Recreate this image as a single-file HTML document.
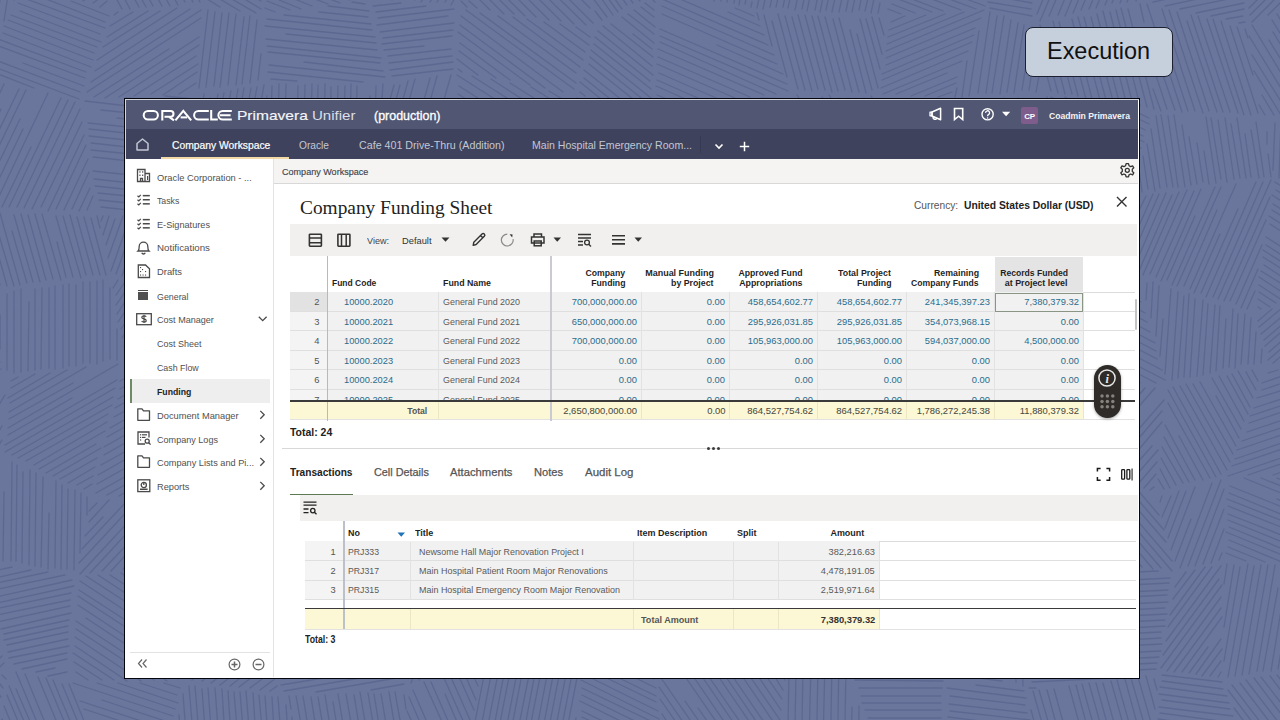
<!DOCTYPE html>
<html><head><meta charset="utf-8">
<style>
*{margin:0;padding:0;box-sizing:border-box}
html,body{width:1280px;height:720px;overflow:hidden}
body{background:#6a769c;font-family:"Liberation Sans",sans-serif;position:relative}
.a{position:absolute;white-space:nowrap}
svg{position:absolute;overflow:visible}
</style></head><body>
<svg style="left:0;top:0" width="1280" height="720"><path d="M16 -10L14 0M9 -11L4 21M2 -12L-8 47M-9 16L-18 68M-11 -14L-25 70M-24 23L-32 72M-24 -15L-39 74M-30 -16L-46 76M-37 -17L-53 79M-43 -17L-60 78M-52 -6L-67 80M-57 -17L-73 81M-64 -17L-81 84M-70 -19L-88 83M-77 -19L-92 71M-84 -20L-89 9M1 369L-9 373M0 362L-21 371M-2 355L-37 370M-11 352L-50 369M-7 342L-62 366M-9 335L-76 364M-12 329L-91 363M-11 321L-103 360M-42 327L-117 359M-18 309L-117 352M-20 302L-118 344M-19 295L-120 338M-34 294L-118 330M-77 304L-119 322M-64 291L-119 314M-83 292L-120 308M-92 288L-118 299M-107 287L-119 292M2 440L-9 458M2 426L-19 463M-9 433L-29 465M5 395L-41 471M-9 404L-54 478M-1 378L-64 482M-10 379L-75 487M-17 375L-85 489M-24 375L-97 496M-33 375L-100 487M-38 372L-102 479M-48 374L-103 467M-54 371L-105 456M-63 372L-106 443M-84 393L-108 432M-78 370L-109 422M-85 369L-112 414M-92 366L-112 401M-100 367L-115 391M-107 364L-116 380M-116 364L-118 368M-16 464L-4 468M-25 468L-5 474M-33 472L-9 479M-44 476L-8 487M-44 483L-11 493M-61 485L-14 499M-71 488L-13 505M-78 493L-17 511M-61 505L-18 517M-96 501L-20 523M-100 506L-21 529M-102 512L-22 535M-92 522L-24 542M-103 526L-26 548M-107 531L-27 555M-109 538L-38 559M-110 544L-61 559M-113 551L-83 559M-113 557L-104 559M4 663L-6 672M2 656L-18 674M-1 648L-35 680M-2 641L-49 685M-3 634L-61 688M-5 628L-74 692M-9 623L-87 696M-30 632L-88 687M-14 609L-90 681M-14 599L-92 672M-52 626L-94 666M-20 588L-93 657M-22 582L-95 650M-51 600L-98 643M-35 575L-98 634M-30 562L-99 627M-38 561L-102 621M-48 562L-103 613M-58 562L-106 606M-67 562L-108 600M-85 570L-109 592M-87 563L-109 584M-94 561L-112 578M-105 562L-114 570M2 675L6 679M-4 679L3 688M-10 682L1 697M-20 679L-1 704M-27 682L-2 715M-24 696L-4 722M-37 691L-5 733M-47 689L-7 741M-54 690L-9 749M-62 692L-11 759M-68 693L-12 768M-76 696L-20 770M-82 698L-29 769M-87 704L-39 767M-86 716L-49 766M-88 725L-58 766M-88 736L-67 763M-89 745L-76 763M107 1L100 7M107 -7L93 3M106 -15L83 1M105 -24L72 -1M104 -33L63 -4M101 -38L54 -5M100 -47L44 -8M99 -56L36 -11M99 -64L27 -13M96 -71L24 -21M80 -68L23 -29M72 -72L25 -39M92 -95L26 -49M91 -103L26 -57M83 -106L28 -68M74 -110L29 -78M62 -111L27 -86M55 -115L28 -96M44 -115L28 -104M35 -118L31 -115M71 1L109 16M23 -10L105 22M21 -3L105 28M18 3L100 34M20 11L101 42M11 15L97 47M8 20L94 53M4 26L93 60M3 33L91 67M-2 39L86 72M-4 45L85 78M23 63L84 86M-10 58L80 92M-11 65L79 99M-15 69L34 88M93 196L87 210M90 188L79 211M89 172L72 209M88 159L64 210M86 145L56 209M84 135L48 211M82 122L41 207M80 109L32 209M75 102L24 208M68 100L17 207M61 98L9 207M31 147L2 207M48 93L-7 209M23 129L-11 200M20 119L-11 183M26 90L-12 169M19 89L-13 155M1 109L-15 143M4 84L-15 124M-1 81L-17 113M-10 82L-17 98M-16 79L-18 84M97 216L100 228M91 218L106 275M84 217L100 275M77 217L93 275M70 215L86 275M63 216L81 278M56 216L73 277M57 242L66 277M42 214L61 280M35 214L53 279M28 215L46 280M21 214L40 282M14 215L33 282M12 231L27 283M-0 213L20 285M-7 215L14 286M-11 221L7 286M-13 239L0 285M-14 260L-5 289M-16 281L-14 288M117 329L117 360M110 288L110 359M103 280L103 361M97 281L97 364M90 282L90 363M83 282L83 363M76 285L76 366M69 284L69 366M63 285L63 368M55 286L55 369M49 288L49 368M42 288L41 369M35 289L35 370M29 302L28 371M21 289L21 372M14 291L14 373M7 294L7 370M0 315L0 349M-7 295L-7 327M-13 297L-13 307M92 484L84 489M93 476L77 485M95 467L68 483M97 458L60 479M101 448L53 476M96 444L46 473M105 431L39 469M107 422L34 465M108 414L26 461M112 405L18 458M113 397L12 455M115 388L5 452M117 380L5 445M72 398L8 435M118 364L8 428M73 383L9 419M86 367L9 412M67 370L10 403M50 373L8 398M35 374L11 388M18 377L11 381M87 497L87 515M81 493L80 553M75 490L74 570M68 489L67 569M62 485L61 569M56 481L55 568M49 513L48 569M43 477L41 567M36 473L35 566M30 470L29 565M23 472L22 563M17 465L16 561M12 462L11 561M4 492L3 561M-2 502L-2 561M-8 499L-9 560M-14 520L-15 557M-22 548L-22 558M67 672L48 676M55 668L36 672M67 659L22 669M67 653L14 664M69 646L9 658M68 639L8 652M68 632L7 645M68 626L4 640M69 620L4 634M71 613L1 629M70 606L-3 622M70 600L-3 615M71 593L-5 609M74 586L-7 604M72 580L-8 598M65 575L-11 591M48 572L-12 585M31 570L-14 580M12 567L-16 573M-4 564L-20 567M69 684L104 770M62 684L97 768M53 680L91 771M46 678L85 771M38 677L76 768M51 721L72 770M25 674L64 769M16 672L57 770M16 689L51 770M9 686L44 768M7 695L38 769M4 706L31 771M2 719L24 770M-0 727L18 770M-2 738L12 771M-4 749L6 771M-7 758L-2 768M207 -105L210 -98M199 -105L210 -84M191 -105L209 -72M193 -85L207 -60M174 -105L206 -46M166 -105L205 -34M158 -103L204 -19M149 -106L202 -8M140 -106L200 2M133 -106L193 2M126 -105L185 2M117 -106L178 5M127 -72L170 6M100 -105L162 6M96 -97L153 6M99 -79L146 7M103 -57L139 7M107 -34L130 9M110 -13L122 9M196 83L179 94M197 72L163 95M198 64L151 94M196 56L134 96M199 45L119 97M199 37L105 98M169 49L94 97M201 18L87 92M201 10L91 82M190 9L95 71M177 8L97 60M160 11L103 47M148 11L107 37M133 12L110 26M118 12L114 15M165 96L193 99M126 98L196 106M85 101L197 114M101 110L198 120M117 118L198 127M88 123L198 134M89 129L199 141M89 136L201 148M91 143L201 155M91 150L200 161M93 157L203 169M142 169L205 176M93 171L205 183M94 179L206 191M95 186L207 198M98 193L206 204M99 200L207 211M101 207L192 217M209 225L186 293M205 219L180 291M198 222L174 290M190 221L166 289M184 218L160 288M177 221L155 284M170 219L147 283M164 219L142 281M152 231L135 279M150 219L129 277M142 218L122 276M136 218L116 274M130 217L111 271M123 216L108 258M115 219L106 245M109 216L103 235M103 216L101 221M172 372L161 388M176 356L156 385M179 339L152 379M184 322L147 375M187 307L142 374M185 299L137 369M179 299L133 365M152 327L128 362M166 294L126 354M160 293L124 346M154 290L122 338M149 289L121 329M142 287L118 322M135 287L117 314M130 285L116 305M125 282L116 295M118 280L113 288M196 502L189 506M192 496L179 504M191 489L166 503M189 482L155 501M187 474L142 499M185 467L130 499M165 470L119 496M169 460L107 495M180 446L96 493M175 440L97 484M149 446L98 475M173 425L101 465M171 417L104 455M169 410L104 447M160 407L107 437M156 402L110 428M159 392L114 417M152 387L115 408M147 382L118 399M141 378L120 389M135 373L120 381M207 553L197 562M201 548L186 564M194 546L176 565M202 526L165 566M199 520L155 567M197 510L144 567M188 510L134 568M179 509L123 569M171 506L111 571M164 505L102 571M153 505L90 573M145 504L80 574M134 504L79 563M126 502L82 549M103 517L85 536M109 500L89 522M97 503L89 511M200 566L207 571M191 568L204 577M178 568L203 585M168 570L203 592M157 571L199 598M166 586L198 606M133 573L197 615M121 573L195 622M110 575L193 629M98 575L192 637M86 576L192 645M80 581L187 651M79 590L187 660M78 596L185 666M78 605L184 675M86 618L178 679M76 621L167 681M76 629L154 680M75 637L141 681M75 646L127 681M73 653L114 680M74 662L102 680M76 672L88 680M164 683L180 688M140 683L177 695M118 683L178 703M97 683L175 709M73 683L173 716M102 700L171 723M80 701L169 730M84 709L169 737M120 729L168 745M93 727L166 751M96 736L162 758M112 749L159 764M105 754L144 766M108 762L128 768M256 -114L267 -108M249 -112L265 -103M240 -110L264 -96M231 -108L264 -89M221 -106L264 -80M217 -101L263 -74M215 -94L263 -66M215 -87L264 -58M213 -81L263 -51M213 -72L263 -43M235 -53L263 -36M212 -58L262 -29M210 -52L262 -22M211 -43L260 -15M210 -36L262 -5M211 -29L261 1M210 -22L261 9M211 -13L256 13M208 -8L240 11M207 -1L220 7M261 54L258 80M257 20L250 83M250 16L242 84M244 17L236 85M236 14L228 85M229 13L220 87M222 13L214 86M215 12L206 87M208 10L199 88M278 184L273 210M275 166L267 212M273 144L261 212M270 122L254 212M267 96L247 213M264 85L241 214M257 87L234 214M251 88L228 215M244 88L222 213M238 89L216 214M231 91L211 205M224 93L208 183M218 94L206 160M210 98L203 139M204 94L201 115M277 686L270 691M276 678L260 690M277 668L250 688M276 659L239 687M275 651L230 686M276 642L220 685M253 651L211 683M275 626L202 681M273 617L192 680M274 609L191 673M274 600L191 664M273 593L195 653M273 583L195 642M272 576L199 632M265 573L200 622M236 585L204 610M244 570L205 599M235 569L208 590M225 567L210 579M306 738L307 745M299 728L301 748M292 717L294 748M286 705L289 748M278 697L282 750M272 697L275 749M265 696L269 751M259 695L264 752M253 693L257 753M246 691L251 753M240 692L245 754M234 692L239 752M228 691L232 754M222 689L226 756M215 688L220 755M208 688L213 756M202 689L207 757M195 686L201 760M189 686L195 759M183 694L188 759M179 715L182 761M173 735L175 761M168 755L169 761M339 -113L362 -104M320 -113L362 -97M330 -103L363 -90M277 -117L364 -83M272 -111L363 -76M271 -106L362 -70M296 -88L365 -62M271 -92L364 -56M271 -85L365 -48M269 -79L365 -41M270 -72L365 -35M269 -65L364 -28M269 -58L364 -22M267 -52L365 -14M270 -45L367 -8M270 -38L364 -2M268 -32L350 0M269 -25L340 3M266 -20L328 4M267 -12L312 6M279 -0L301 9M267 1L290 10M265 8L275 12M352 2L365 4M328 6L369 11M319 12L368 17M284 15L371 24M267 19L372 30M265 26L375 37M286 34L376 43M266 39L377 50M267 46L381 58M268 52L380 63M304 62L383 71M269 65L385 77M268 72L363 82M271 79L297 81M383 84L382 99M376 86L375 121M370 96L368 144M363 107L362 163M357 86L355 183M351 84L349 186M345 86L342 188M338 86L335 191M331 87L329 194M325 84L323 195M318 85L316 199M312 84L309 199M305 85L302 203M298 86L295 205M291 129L289 207M286 84L283 208M279 84L277 165M272 86L271 116M404 684L371 690M402 677L316 692M401 671L284 691M402 665L281 685M402 659L283 679M396 653L282 673M400 646L282 667M400 641L281 661M399 634L280 655M398 628L282 648M397 623L280 643M398 616L282 636M395 610L281 630M396 604L282 623M396 597L281 616M396 591L279 611M393 585L279 605M393 580L281 599M392 573L281 592M392 567L279 587M391 561L279 580M391 555L280 574M404 695L406 709M395 692L406 754M389 692L404 782M381 694L395 777M374 694L387 774M368 693L381 771M360 692L373 769M354 695L366 767M346 694L358 763M338 694L349 760M333 702L342 757M325 695L334 751M318 697L327 750M311 697L319 747M303 696L310 739M296 696L301 724M289 696L291 709M458 -8L451 5M461 -24L445 2M458 -32L437 2M465 -55L430 2M468 -73L421 2M470 -87L415 -0M470 -99L408 -1M461 -99L400 -2M454 -100L392 -0M428 -71L385 -2M440 -103L377 -2M433 -102L372 -5M425 -103L369 -13M412 -95L370 -27M411 -105L369 -38M403 -104L368 -48M396 -106L368 -62M388 -106L368 -73M381 -107L367 -85M372 -104L367 -97M453 69L392 76M453 62L390 70M452 56L389 63M451 49L388 56M424 46L384 50M452 36L382 44M453 30L383 38M454 23L380 32M448 16L377 25M454 9L378 18M426 6L376 12M401 3L373 6M461 161L459 169M460 140L451 172M457 126L444 172M456 104L437 173M449 104L430 173M451 75L423 174M431 122L416 176M437 76L409 178M430 78L403 177M408 129L394 180M415 79L387 181M408 81L381 180M400 85L373 183M394 85L367 184M376 122L360 183M478 644L474 656M473 638L465 659M469 630L456 662M465 622L447 668M460 615L439 670M457 606L429 677M451 600L419 680M445 596L411 683M439 592L408 672M435 588L406 659M429 581L405 641M423 577L403 629M418 572L402 615M411 570L400 598M406 565L398 583M402 558L397 570M480 657L483 664M474 660L480 674M468 664L478 686M462 668L476 700M456 670L474 710M449 673L471 722M444 678L469 734M445 694L467 745M431 682L464 757M424 682L459 759M434 721L451 761M413 690L446 766M409 697L439 766M407 711L434 771M408 728L427 772M407 743L422 776M408 761L415 777M558 -112L571 -100M547 -112L573 -86M542 -108L574 -77M530 -110L577 -63M522 -108L579 -52M513 -106L583 -37M505 -104L583 -27M495 -104L585 -15M487 -102L587 -3M479 -101L590 8M474 -95L593 23M529 -31L586 25M472 -77L574 24M470 -69L561 21M469 -60L549 20M468 -51L536 17M468 -40L525 16M465 -34L514 14M464 -26L504 14M463 -17L490 10M469 1L477 8M461 1L467 7M576 27L590 37M560 24L589 45M544 22L585 52M527 19L583 60M513 17L580 67M498 16L576 73M480 13L576 83M466 10L574 89M461 16L563 92M460 25L545 88M458 32L530 85M460 43L510 80M459 51L496 78M457 59L478 75M458 69L462 72M549 91L569 103M531 87L568 110M510 83L564 117M491 79L561 124M472 76L561 132M457 75L556 138M459 86L555 147M458 94L552 154M461 103L551 161M484 128L547 168M467 126L535 169M461 130L522 169M486 155L510 170M463 149L495 170M464 158L483 170M467 168L472 171M577 771L574 791M577 741L568 788M576 718L563 787M578 673L556 785M577 648L551 783M571 649L545 783M564 650L539 779M558 649L534 777M552 649L528 775M545 652L521 773M539 652L516 774M534 650L510 770M526 653L504 768M521 652L499 766M513 657L492 763M508 653L487 764M502 653L481 761M495 654L475 759M488 655L468 758M682 -86L688 -78M674 -87L685 -72M666 -87L682 -65M653 -94L679 -59M646 -94L676 -53M636 -98L673 -47M626 -101L670 -39M619 -101L668 -34M632 -73L663 -30M598 -108L661 -22M590 -110L658 -16M579 -114L654 -10M571 -114L650 -6M572 -102L644 -3M575 -89L640 1M578 -73L633 3M580 -60L627 5M584 -44L622 9M586 -32L618 12M589 -19L613 15M592 -3L607 17M595 11L602 20M652 -1L655 2M645 3L654 10M641 7L654 17M634 10L655 27M628 14L654 34M622 17L654 43M633 34L652 49M611 24L653 57M603 26L652 66M598 31L653 75M595 37L650 81M594 44L651 89M591 50L651 98M590 57L650 105M589 64L643 107M584 70L627 104M584 78L614 102M580 82L601 99M580 92L585 96M635 108L649 113M577 98L653 120M573 103L652 127M572 108L654 132M572 114L656 139M571 121L658 147M568 126L659 153M566 131L662 160M565 138L663 167M565 144L663 173M569 152L665 180M561 155L665 186M558 161L668 194M555 166L668 200M645 199L670 206M601 653L654 679M583 652L656 688M582 660L656 696M582 666L656 702M581 673L658 711M581 680L659 719M582 688L661 726M582 695L661 734M580 701L659 740M582 711L652 745M582 717L647 748M607 737L640 753M583 732L632 756M579 737L627 760M580 745L622 765M582 754L614 769M580 760L608 774M582 769L600 777M580 774L596 781M582 782L588 785M752 2L751 7M750 -19L745 4M747 -40L739 5M745 -57L734 3M743 -79L727 2M741 -102L721 1M734 -103L714 1M721 -62L710 -2M721 -94L703 -3M711 -81L696 -5M707 -88L691 -4M696 -65L685 -6M693 -83L678 -8M682 -58L673 -10M671 -35L667 -10M735 8L754 16M728 12L760 26M673 -4L764 35M662 -1L768 45M662 6L774 55M662 14L777 64M717 45L783 74M660 29L787 84M660 36L788 91M660 42L776 94M658 49L764 95M658 57L750 97M657 64L735 98M659 73L723 101M657 80L709 103M656 86L699 105M657 95L682 105M658 102L670 107M761 98L791 99M719 103L793 106M685 110L790 113M658 115L792 119M660 122L791 126M714 131L790 134M660 136L790 140M662 142L790 146M666 150L790 154M666 156L790 160M667 164L792 167M669 169L789 173M671 177L790 180M670 184L792 187M674 190L791 194M673 197L790 200M677 204L791 207M721 213L790 215M780 672L785 680M775 677L783 690M764 673L782 699M756 673L781 710M751 678L780 720M740 673L781 733M731 674L779 744M724 674L777 752M716 673L777 762M707 674L776 774M701 675L774 782M693 676L762 777M684 675L753 775M698 708L739 767M685 701L729 765M659 675L717 759M659 687L705 754M660 699L696 751M662 714L683 746M664 728L674 742M880 3L878 13M875 -6L871 13M871 -14L865 11M866 -26L859 10M862 -35L852 12M857 -45L846 11M853 -54L839 12M848 -63L832 12M844 -73L826 10M840 -84L820 12M834 -83L815 10M827 -85L807 11M822 -86L802 9M816 -90L795 10M809 -89L788 8M803 -92L783 7M798 -94L776 7M791 -93L770 7M775 -48L763 9M779 -97L757 8M770 -81L753 -4M766 -100L751 -28M761 -103L749 -45M755 -103L747 -66M748 -103L745 -85M879 18L884 35M872 17L882 54M866 19L880 69M860 19L878 88M857 34L872 90M850 30L866 93M839 18L859 92M833 19L852 92M825 17L845 90M818 16L838 91M812 16L832 92M805 15L825 90M798 15L818 89M792 17L812 91M785 16L805 90M778 14L798 89M772 21L787 77M764 15L772 46M757 13L759 20M871 96L874 101M864 98L872 110M859 104L869 118M848 98L866 125M839 98L865 136M829 95L861 143M822 97L859 153M822 108L857 161M809 101L854 168M797 95L851 176M797 108L849 187M797 119L846 194M795 128L844 202M796 144L839 208M796 155L832 209M795 167L823 210M796 179L818 212M796 191L811 214M794 201L803 214M880 764L879 781M872 745L872 782M867 728L865 783M859 706L858 781M852 707L850 783M846 665L844 783M839 655L837 783M832 659L830 782M825 662L822 784M818 662L816 781M811 665L808 781M803 668L801 782M796 671L794 784M789 672L787 782M781 749L780 781M926 -77L940 -72M904 -79L944 -64M877 -82L948 -55M853 -85L953 -47M846 -80L959 -38M870 -65L962 -30M855 -63L971 -20M875 -49L974 -12M861 -47L979 -3M865 -39L985 6M904 -18L976 9M873 -23L961 10M907 -3L943 11M880 -8L932 12M892 4L915 13M888 9L901 14M952 92L938 97M956 83L925 96M957 77L911 96M947 73L896 94M962 61L883 94M968 51L881 88M972 42L882 80M974 35L882 74M975 28L886 65M981 18L886 58M984 10L886 51M964 12L887 44M945 14L888 37M926 15L889 30M905 16L891 22M941 147L932 164M947 120L923 168M948 101L911 175M940 101L900 180M932 102L891 184M924 100L879 190M916 100L869 194M909 99L858 200M901 99L848 204M892 99L857 169M884 100L868 133M850 659L925 659M882 667L941 667M854 674L942 674M855 680L943 681M859 688L942 688M861 696L941 696M862 703L941 703M865 710L941 710M868 718L941 718M870 725L941 725M873 732L941 732M893 740L943 740M879 747L940 747M881 755L943 755M896 761L942 761M887 769L942 769M888 777L925 777M1035 -98L1040 -97M1019 -94L1039 -90M1000 -90L1037 -84M983 -86L1037 -77M967 -82L1039 -69M950 -79L1035 -64M944 -73L1036 -56M950 -66L1036 -51M955 -58L1035 -44M959 -50L1037 -37M962 -43L1033 -31M966 -36L1034 -24M968 -28L1035 -16M974 -21L1035 -11M977 -13L1034 -3M982 -6L1032 3M988 2L1031 9M990 8L1032 16M1039 76L1036 92M1037 39L1029 90M1032 27L1022 90M1024 25L1014 93M1018 23L1007 92M1011 20L1000 94M1004 16L992 93M997 16L986 93M990 12L978 93M979 31L969 96M967 61L962 97M957 88L955 97M1058 196L1056 210M1054 162L1050 206M1050 127L1042 205M1047 97L1036 201M1039 99L1029 199M1029 130L1022 196M1025 100L1015 192M1018 98L1009 190M1010 100L1002 186M1004 98L995 183M993 133L988 180M990 100L982 178M983 100L975 176M975 102L968 174M969 101L962 171M961 103L955 167M955 100L949 165M944 140L942 162M1046 561L1047 585M1040 560L1041 612M1033 563L1035 645M1027 562L1029 675M1020 562L1023 686M1013 561L1016 682M1007 561L1009 678M1000 562L1002 676M993 562L995 674M986 563L988 672M981 562L983 671M974 576L976 666M967 597L969 666M962 616L963 663M955 636L955 659M950 668L974 671M947 674L1002 681M976 685L1024 691M947 688L1026 698M950 696L1025 705M949 704L1027 713M950 711L1030 720M948 717L1029 727M986 728L1030 734M948 731L1032 741M947 738L1033 748M948 746L1033 756M948 753L1032 763M977 764L1012 768M947 767L972 770M1149 -32L1136 1M1162 -81L1127 2M1158 -89L1120 3M1152 -91L1112 3M1128 -50L1105 5M1118 -44L1096 8M1131 -91L1089 9M1104 -45L1081 10M1117 -92L1073 13M1110 -93L1065 16M1103 -92L1058 15M1079 -54L1049 16M1089 -94L1040 21M1082 -95L1037 14M1073 -88L1037 -3M1054 -64L1038 -26M1061 -96L1039 -44M1048 -82L1041 -66M1047 -96L1043 -84M1140 4L1144 22M1141 31L1149 62M1128 9L1154 109M1121 8L1147 107M1116 10L1140 106M1110 12L1133 105M1103 11L1127 106M1097 14L1119 102M1091 17L1113 101M1084 17L1106 100M1078 17L1100 100M1072 19L1092 99M1073 50L1086 99M1059 22L1078 96M1053 21L1072 94M1055 55L1065 94M1040 25L1058 93M1040 49L1051 91M1130 109L1149 118M1110 105L1149 124M1088 102L1145 130M1065 97L1143 136M1051 97L1144 142M1057 107L1141 148M1051 111L1140 154M1053 119L1138 161M1055 126L1136 166M1056 133L1135 172M1054 139L1132 177M1056 147L1130 184M1058 155L1128 190M1059 162L1125 194M1058 168L1118 197M1060 176L1108 199M1059 182L1100 202M1059 189L1090 204M1061 196L1083 207M1062 204L1074 210M1124 200L1128 202M1117 204L1129 210M1107 206L1129 218M1097 207L1131 226M1090 210L1131 233M1082 213L1132 241M1072 215L1132 249M1062 217L1134 258M1063 224L1134 264M1062 232L1136 273M1061 237L1131 276M1060 245L1122 280M1059 251L1113 282M1059 258L1106 285M1066 269L1100 289M1058 273L1092 292M1057 279L1084 294M1058 288L1077 298M1062 297L1071 302M1058 301L1063 304M1131 282L1138 285M1124 285L1139 293M1125 293L1141 302M1105 292L1145 313M1099 297L1147 322M1088 299L1150 332M1078 302L1155 343M1070 306L1156 351M1063 310L1157 359M1054 314L1162 370M1055 323L1165 380M1056 331L1156 383M1056 339L1140 383M1058 348L1127 384M1066 360L1109 383M1059 365L1095 384M1064 375L1081 385M1061 382L1066 384M1154 487L1150 490M1156 474L1144 488M1157 462L1138 484M1158 450L1132 480M1152 446L1124 478M1162 422L1118 474M1162 411L1110 472M1164 400L1105 468M1136 420L1097 466M1155 388L1089 463M1145 388L1083 460M1137 387L1077 457M1127 386L1068 454M1090 418L1062 452M1108 388L1059 444M1096 389L1060 431M1089 387L1059 421M1079 388L1059 411M1068 389L1058 401M1136 488L1159 515M1122 481L1164 530M1109 476L1166 542M1093 469L1172 561M1080 463L1172 571M1067 458L1161 568M1060 459L1153 569M1060 471L1142 567M1058 478L1132 565M1079 513L1123 565M1058 500L1113 564M1057 509L1103 563M1056 519L1092 560M1056 528L1083 560M1057 539L1071 557M1055 547L1063 556M1036 688L1029 688M1112 678L1032 682M1156 669L1035 675M1157 663L1034 669M1159 657L1035 664M1161 651L1036 657M1162 644L1039 650M1161 638L1039 645M1161 632L1041 638M1165 626L1043 633M1165 620L1042 626M1167 614L1043 620M1165 608L1046 614M1168 602L1045 608M1167 595L1049 601M1168 590L1050 596M1169 583L1048 589M1170 578L1051 584M1158 571L1054 576M1120 567L1052 570M1092 563L1054 565M1154 679L1157 690M1146 676L1155 709M1138 677L1154 733M1131 678L1153 755M1125 679L1151 775M1117 680L1144 776M1111 681L1137 774M1103 683L1128 773M1096 683L1121 774M1089 683L1114 773M1082 684L1107 773M1076 685L1099 771M1069 686L1092 770M1071 722L1084 769M1054 689L1076 769M1047 690L1068 768M1039 690L1061 766M1033 691L1054 765M1031 710L1046 765M1245 22L1239 23M1243 16L1226 19M1244 9L1211 16M1244 3L1196 13M1243 -4L1180 9M1221 -6L1165 6M1244 -17L1153 2M1243 -23L1146 -3M1243 -29L1148 -10M1242 -36L1150 -18M1241 -42L1153 -24M1242 -48L1152 -30M1243 -56L1155 -38M1242 -62L1157 -44M1241 -69L1157 -52M1241 -74L1159 -58M1242 -81L1161 -64M1242 -87L1161 -71M1239 -93L1164 -78M1205 -93L1164 -85M1245 29L1248 38M1237 27L1253 75M1230 26L1258 113M1221 21L1251 115M1213 19L1244 115M1207 19L1238 113M1198 16L1230 112M1191 15L1223 112M1187 21L1217 112M1177 12L1209 111M1169 10L1203 113M1162 9L1195 111M1169 53L1188 111M1147 4L1182 112M1155 52L1175 110M1148 51L1167 109M1153 89L1161 111M1268 154L1271 177M1256 122L1264 177M1251 130L1259 178M1245 134L1251 177M1237 118L1246 178M1231 124L1240 178M1225 118L1234 179M1218 120L1227 182M1211 118L1221 179M1206 117L1216 183M1204 151L1209 184M1197 143L1203 182M1189 137L1197 184M1182 125L1191 185M1174 115L1185 187M1168 116L1178 187M1161 115L1173 187M1156 116L1167 187M1151 129L1160 188M1147 144L1155 191M1143 156L1148 189M1139 169L1142 192M1135 182L1136 190M1255 291L1247 309M1258 269L1241 308M1262 245L1236 304M1266 220L1230 301M1270 197L1224 301M1271 180L1218 299M1263 182L1213 297M1256 182L1206 297M1238 209L1201 293M1220 234L1194 293M1236 184L1190 289M1217 210L1184 286M1221 187L1177 286M1215 187L1172 285M1195 216L1167 280M1201 189L1161 281M1194 191L1156 277M1187 190L1150 274M1179 192L1143 275M1172 195L1139 271M1166 193L1138 258M1159 194L1136 247M1153 194L1135 235M1146 196L1134 221M1138 197L1132 210M1262 349L1261 363M1256 332L1254 364M1251 318L1248 364M1245 314L1241 364M1238 314L1235 368M1233 309L1229 367M1226 319L1223 368M1220 306L1216 371M1215 305L1210 373M1208 304L1203 375M1203 300L1197 376M1195 299L1190 377M1189 294L1184 377M1184 296L1178 378M1178 292L1172 380M1171 289L1165 374M1163 319L1160 356M1159 286L1156 336M1153 282L1151 318M1147 283L1146 300M1252 370L1258 381M1246 372L1256 390M1238 371L1253 398M1232 374L1250 407M1227 376L1248 414M1219 376L1244 421M1212 378L1241 429M1216 396L1239 438M1200 382L1236 446M1193 384L1233 454M1186 384L1230 462M1180 386L1227 470M1173 387L1221 474M1168 390L1216 477M1168 403L1210 478M1179 436L1203 480M1165 425L1195 480M1164 437L1189 482M1162 447L1183 483M1161 458L1176 485M1160 469L1170 488M1158 479L1164 489M1222 553L1219 560M1224 529L1211 563M1224 509L1203 564M1224 489L1195 566M1221 480L1188 566M1212 483L1180 568M1191 519L1175 561M1195 487L1171 550M1186 491L1168 538M1179 491L1165 528M1171 496L1162 517M1162 496L1160 502M1221 672L1218 677M1221 661L1210 676M1222 649L1202 676M1221 639L1196 674M1208 647L1189 673M1222 617L1182 672M1221 608L1174 672M1221 597L1167 671M1222 585L1161 668M1219 579L1163 655M1221 566L1166 641M1212 567L1168 627M1205 567L1170 615M1195 570L1173 599M1186 572L1175 587M1162 675L1222 682M1162 681L1223 689M1160 687L1227 696M1159 694L1229 703M1162 700L1230 709M1159 707L1233 716M1160 713L1235 723M1158 719L1239 730M1197 731L1240 737M1157 731L1242 743M1156 738L1247 751M1158 744L1249 756M1159 751L1250 763M1158 758L1254 771M1156 763L1257 777M1156 770L1258 784M1155 777L1238 788M1349 -22L1344 -18M1347 -29L1329 -11M1343 -33L1314 -5M1342 -42L1299 1M1338 -46L1284 8M1307 -24L1268 15M1333 -59L1252 22M1331 -65L1250 15M1327 -69L1249 8M1323 -74L1250 -2M1321 -81L1248 -9M1315 -83L1248 -16M1306 -83L1249 -26M1299 -84L1247 -33M1286 -81L1248 -43M1285 -87L1249 -52M1277 -88L1249 -60M1268 -87L1248 -67M1257 -84L1247 -74M1254 -89L1248 -84M1350 -16L1353 -11M1344 -12L1353 3M1338 -9L1355 20M1329 -8L1356 36M1324 -5L1358 51M1317 -2L1359 67M1311 2L1362 85M1318 28L1362 99M1298 7L1364 115M1291 10L1358 119M1284 11L1351 121M1277 14L1341 119M1272 20L1332 117M1273 32L1325 118M1269 40L1317 119M1252 25L1309 119M1249 36L1298 116M1252 55L1290 116M1254 71L1281 115M1262 95L1274 115M1259 105L1265 115M1356 126L1355 148M1349 127L1347 167M1342 124L1339 187M1336 125L1332 205M1329 124L1324 212M1322 124L1319 206M1313 156L1311 203M1309 123L1305 198M1301 124L1298 192M1295 121L1292 189M1288 122L1285 185M1281 121L1279 178M1275 123L1273 170M1267 132L1267 144M1275 182L1298 197M1276 190L1326 221M1272 195L1328 231M1273 204L1329 239M1272 210L1329 246M1269 216L1331 256M1270 224L1332 264M1295 247L1333 271M1266 237L1335 281M1266 245L1332 287M1263 250L1324 289M1263 257L1318 292M1264 265L1308 294M1261 271L1300 295M1259 277L1291 298M1259 285L1285 302M1259 292L1276 303M1258 299L1270 307M1258 307L1261 309M1364 388L1356 395M1362 382L1352 391M1357 377L1344 389M1357 371L1339 386M1348 370L1330 386M1356 355L1325 382M1344 357L1317 380M1351 344L1311 378M1349 338L1307 374M1348 331L1300 372M1347 324L1293 370M1344 318L1287 367M1343 311L1281 364M1342 304L1273 363M1338 300L1268 360M1336 294L1269 352M1327 293L1265 346M1316 296L1264 340M1303 299L1261 334M1287 304L1259 327M1272 309L1258 321M1323 473L1318 475M1330 463L1292 475M1336 454L1273 475M1343 443L1248 475M1349 435L1228 476M1356 424L1232 466M1361 416L1235 459M1367 406L1237 450M1340 408L1242 441M1351 397L1247 432M1339 393L1249 423M1329 390L1250 416M1321 386L1254 408M1290 388L1257 398M1297 378L1262 390M1288 374L1262 383M1278 370L1268 373M1309 477L1323 482M1294 478L1325 491M1277 478L1328 499M1261 478L1329 505M1244 478L1330 513M1277 499L1332 521M1230 486L1332 527M1229 493L1335 536M1227 499L1336 542M1228 506L1339 550M1228 514L1340 558M1228 520L1342 566M1229 527L1322 565M1226 532L1304 564M1229 540L1284 563M1228 547L1265 562M1226 553L1246 561M1342 570L1329 650M1329 606L1320 658M1329 571L1313 660M1322 569L1306 662M1316 569L1300 664M1309 569L1292 664M1301 569L1284 667M1295 569L1278 669M1288 568L1271 671M1278 588L1263 671M1275 565L1257 671M1268 565L1249 674M1261 565L1242 675M1254 566L1235 676M1248 564L1228 677M1240 567L1224 661M1234 565L1224 627M1227 564L1224 584M1322 668L1335 684M1313 666L1342 704M1307 670L1350 727M1298 669L1351 739M1290 671L1346 744M1284 674L1340 748M1277 675L1333 748M1270 676L1327 751M1261 677L1321 755M1254 678L1314 758M1246 680L1309 762M1240 683L1303 766M1232 685L1296 769M1228 690L1290 772M1234 708L1285 776M1244 732L1280 779M1251 752L1273 781M1260 778L1268 787" stroke="#5a658e" stroke-width="1.3" stroke-linecap="round" fill="none" opacity="0.8"/></svg>
<div class="a" style="left:1025px;top:27px;width:148px;height:50px;border:1px solid #1c2030;border-radius:8px;background:#c6cfdc"></div>
<div class="a" style="left:1047.30px;top:40.00px;font-size:23.7px;line-height:23.7px;color:#111;font-weight:normal;transform:scaleX(0.9901);transform-origin:0 0;">Execution</div>
<div class="a" style="left:124px;top:98px;width:1016px;height:581px;border:1px solid #05050d;background:#fff"></div>
<div class="a" style="left:125px;top:99px;width:1014px;height:1px;background:#d4d6de"></div>
<div class="a" style="left:125px;top:99px;width:1px;height:60px;background:#d4d6de"></div>
<div class="a" style="left:126px;top:100px;width:1012px;height:29px;background:#515672"></div>
<div class="a" style="left:126px;top:129px;width:1012px;height:30px;background:#3e425d"></div>
<div class="a" style="left:125px;top:159px;width:149px;height:518px;background:#fff;border-right:1px solid #e3e3e3"></div>
<div class="a" style="left:274px;top:159px;width:864px;height:25px;background:#f5f4f2;border-bottom:1px solid #d8d8d8"></div>
<div class="a" style="left:274px;top:184px;width:864px;height:493px;background:#fff"></div>
<svg style="left:142px;top:110px" width="92" height="11" viewBox="0 0 92 11"><g fill="none" stroke="#fff" stroke-width="2.05"><rect x="1.7" y="0.9" width="14.2" height="8.6" rx="4.3"/><path d="M20.3,10.4 V0.9 H28.6 A2.9,2.9 0 0 1 28.6,6.7 H22.5 M26.8,6.7 L32,10.4"/><path d="M33.4,10.4 L41.3,0.9 L49.2,10.4"/><path d="M38.6,7.4 H45.2"/><path d="M66.8,0.9 H56.4 A4.3,4.3 0 0 0 56.4,9.5 H66.8"/><path d="M69.2,0 V9.5 H75.8"/><path d="M89.8,0.9 H80.7 A4.3,4.3 0 0 0 80.7,9.5 H89.8 M78,5.2 H88.6"/></g></svg>
<div class="a" style="left:236.50px;top:110.00px;font-size:12.9px;line-height:12.9px;color:#f4f5f8;font-weight:normal;transform:scaleX(1.2051);transform-origin:0 0;-webkit-text-stroke:0.15px #f4f5f8">Primavera</div>
<div class="a" style="left:311.60px;top:110.00px;font-size:12.9px;line-height:12.9px;color:#dcdfe8;font-weight:normal;transform:scaleX(1.1678);transform-origin:0 0;">Unifier</div>
<div class="a" style="left:374.00px;top:110.00px;font-size:12.2px;line-height:12.2px;color:#ffffff;font-weight:normal;transform:scaleX(1.0223);transform-origin:0 0;-webkit-text-stroke:0.3px #fff">(production)</div>
<svg style="left:929px;top:107px" width="14" height="14" viewBox="0 0 14 14"><g fill="none" stroke="#fff" stroke-width="1.5" stroke-linejoin="round"><path d="M11.6,1.3 V12.7 L3,9 V5 Z"/><path d="M1,5.2 H3 V8.8 H1 Z" stroke-width="1.3"/><path d="M4.2,9.6 C3.6,12.6 7.4,13.4 8,10.8"/></g></svg>
<svg style="left:953px;top:107px" width="12" height="14" viewBox="0 0 12 14"><path d="M1.5,1.5 H9.7 V12.5 L5.6,9.2 L1.5,12.5 Z" fill="none" stroke="#fff" stroke-width="1.6" stroke-linejoin="miter"/></svg>
<svg style="left:981px;top:108px" width="14" height="14" viewBox="0 0 14 14"><circle cx="6.6" cy="6.3" r="5.6" fill="none" stroke="#fff" stroke-width="1.4"/><path d="M4.6,4.9 A2,2 0 1 1 7.4,6.6 C6.7,7 6.6,7.4 6.6,8.2" fill="none" stroke="#fff" stroke-width="1.3"/><circle cx="6.6" cy="10" r="0.8" fill="#fff"/></svg>
<svg style="left:1001px;top:111px" width="10" height="6" viewBox="0 0 10 6"><path d="M1,0.8 H9.2 L5.1,5.2 Z" fill="#fff"/></svg>
<div class="a" style="left:1021px;top:107px;width:17px;height:17px;background:#7e5c8c;border-radius:2px"></div>
<div class="a" style="left:1029.50px;top:113.00px;font-size:8px;line-height:8px;color:#fff;font-weight:bold;transform:translateX(-50%);letter-spacing:-0.3px">CP</div>
<div class="a" style="left:1049.00px;top:111.00px;font-size:9.5px;line-height:9.5px;color:#f4f4f8;font-weight:bold;transform:scaleX(0.9077);transform-origin:0 0;">Coadmin Primavera</div>
<svg style="left:136px;top:138px" width="14" height="13" viewBox="0 0 14 13"><path d="M1,12 V5.5 L6.5,1 L12,5.5 V12 Z" fill="none" stroke="#c2c6d2" stroke-width="1.5" stroke-linejoin="round"/></svg>
<div class="a" style="left:161px;top:157px;width:128px;height:2px;background:#f3d9a6"></div>
<div class="a" style="left:172.00px;top:141.00px;font-size:10.3px;line-height:10.3px;color:#ffffff;font-weight:normal;transform:scaleX(1.0005);transform-origin:0 0;-webkit-text-stroke:0.2px #fff">Company Workspace</div>
<div class="a" style="left:299.00px;top:141.00px;font-size:10.3px;line-height:10.3px;color:#c3c7d3;font-weight:normal;transform:scaleX(0.9892);transform-origin:0 0;">Oracle</div>
<div class="a" style="left:358.50px;top:141.00px;font-size:10.3px;line-height:10.3px;color:#c3c7d3;font-weight:normal;transform:scaleX(1.0377);transform-origin:0 0;">Cafe 401 Drive-Thru (Addition)</div>
<div class="a" style="left:532.30px;top:141.00px;font-size:10.3px;line-height:10.3px;color:#c3c7d3;font-weight:normal;transform:scaleX(1.0241);transform-origin:0 0;">Main Hospital Emergency Room...</div>
<div class="a" style="left:700px;top:136px;width:1px;height:17px;background:#363a52"></div>
<svg style="left:714.2px;top:142.6px" width="10" height="7" viewBox="0 0 10 7"><path d="M1.5,1.5 L5,5 L8.5,1.5" fill="none" stroke="#fff" stroke-width="1.6"/></svg>
<svg style="left:739.4px;top:140.6px" width="11" height="11" viewBox="0 0 11 11"><path d="M5.5,0.8 V10.2 M0.8,5.5 H10.2" fill="none" stroke="#fff" stroke-width="1.5"/></svg>
<div class="a" style="left:130px;top:379px;width:140px;height:24px;background:#eeeeee"></div>
<div class="a" style="left:130px;top:379px;width:2px;height:24px;background:#6f8a66"></div>
<div class="a" style="left:156.60px;top:173.00px;font-size:9.8px;line-height:9.8px;color:#505050;font-weight:normal;transform:scaleX(0.9514);transform-origin:0 0;">Oracle Corporation - ...</div>
<div class="a" style="left:156.60px;top:196.00px;font-size:9.8px;line-height:9.8px;color:#505050;font-weight:normal;transform:scaleX(0.8903);transform-origin:0 0;">Tasks</div>
<div class="a" style="left:156.60px;top:220.00px;font-size:9.8px;line-height:9.8px;color:#505050;font-weight:normal;transform:scaleX(0.9357);transform-origin:0 0;">E-Signatures</div>
<div class="a" style="left:156.60px;top:243.00px;font-size:9.8px;line-height:9.8px;color:#505050;font-weight:normal;transform:scaleX(0.9930);transform-origin:0 0;">Notifications</div>
<div class="a" style="left:156.60px;top:267.00px;font-size:9.8px;line-height:9.8px;color:#505050;font-weight:normal;transform:scaleX(0.9564);transform-origin:0 0;">Drafts</div>
<div class="a" style="left:156.60px;top:292.00px;font-size:9.8px;line-height:9.8px;color:#505050;font-weight:normal;transform:scaleX(0.9036);transform-origin:0 0;">General</div>
<div class="a" style="left:156.60px;top:315.00px;font-size:9.8px;line-height:9.8px;color:#505050;font-weight:normal;transform:scaleX(0.9245);transform-origin:0 0;">Cost Manager</div>
<div class="a" style="left:156.60px;top:339.00px;font-size:9.8px;line-height:9.8px;color:#505050;font-weight:normal;transform:scaleX(0.9161);transform-origin:0 0;">Cost Sheet</div>
<div class="a" style="left:156.60px;top:363.00px;font-size:9.8px;line-height:9.8px;color:#505050;font-weight:normal;transform:scaleX(0.9010);transform-origin:0 0;">Cash Flow</div>
<div class="a" style="left:156.60px;top:387.00px;font-size:9.6px;line-height:9.6px;color:#222;font-weight:bold;transform:scaleX(0.9067);transform-origin:0 0;">Funding</div>
<div class="a" style="left:156.60px;top:411.00px;font-size:9.8px;line-height:9.8px;color:#505050;font-weight:normal;transform:scaleX(0.9483);transform-origin:0 0;">Document Manager</div>
<div class="a" style="left:156.60px;top:435.00px;font-size:9.8px;line-height:9.8px;color:#505050;font-weight:normal;transform:scaleX(0.9256);transform-origin:0 0;">Company Logs</div>
<div class="a" style="left:156.60px;top:458.00px;font-size:9.8px;line-height:9.8px;color:#505050;font-weight:normal;transform:scaleX(0.9375);transform-origin:0 0;">Company Lists and Pi...</div>
<div class="a" style="left:156.60px;top:482.00px;font-size:9.8px;line-height:9.8px;color:#505050;font-weight:normal;transform:scaleX(0.9443);transform-origin:0 0;">Reports</div>
<svg style="left:136px;top:168px" width="15" height="15" viewBox="0 0 15 15"><g fill="none" stroke="#4a4a4a" stroke-width="1.3"><path d="M1.5,13.5 V1.5 H9 V13.5 Z M9,5.5 H13.5 V13.5 H9"/><path d="M4.5,13.5 V10.5 H6.5 V13.5"/></g><g fill="#4a4a4a"><rect x="3.3" y="3.3" width="1.3" height="1.3"/><rect x="6" y="3.3" width="1.3" height="1.3"/><rect x="3.3" y="6.6" width="1.3" height="1.3"/><rect x="6" y="6.6" width="1.3" height="1.3"/><rect x="11" y="8" width="1.2" height="4"/></g></svg>
<svg style="left:136px;top:194px" width="15" height="13" viewBox="0 0 15 13"><g fill="none" stroke="#4a4a4a" stroke-width="1.2"><path d="M1.5,1.8 L2.8,3 L4.8,0.8 M1.5,5.8 L2.8,7 L4.8,4.8 M1.5,9.8 L2.8,11 L4.8,8.8"/></g><g fill="#4a4a4a"><rect x="6.8" y="0.9" width="7" height="1.5"/><rect x="6.8" y="5" width="7" height="1.5"/><rect x="6.8" y="9.1" width="7" height="1.5"/></g></svg>
<svg style="left:136px;top:218px" width="15" height="13" viewBox="0 0 15 13"><g fill="none" stroke="#4a4a4a" stroke-width="1.2"><path d="M1.5,1.8 L2.8,3 L4.8,0.8 M1.5,5.8 L2.8,7 L4.8,4.8 M1.5,9.8 L2.8,11 L4.8,8.8"/></g><g fill="#4a4a4a"><rect x="6.8" y="0.9" width="7" height="1.5"/><rect x="6.8" y="5" width="7" height="1.5"/><rect x="6.8" y="9.1" width="7" height="1.5"/></g></svg>
<svg style="left:136px;top:240px" width="15" height="15" viewBox="0 0 15 15"><g fill="none" stroke="#4a4a4a" stroke-width="1.3"><path d="M2,11 C3.2,10 3.2,8.5 3.2,6.5 A4.3,4.3 0 0 1 11.8,6.5 C11.8,8.5 11.8,10 13,11 Z"/><path d="M5.8,12.8 A1.8,1.8 0 0 0 9.2,12.8"/></g></svg>
<svg style="left:137px;top:264px" width="14" height="15" viewBox="0 0 14 15"><g fill="none" stroke="#4a4a4a" stroke-width="1.3"><path d="M1.3,1 H8.5 L12.5,4.8 V13.5 H1.3 Z"/></g><g fill="#4a4a4a"><rect x="3" y="3" width="1.1" height="1.1"/><rect x="5" y="5" width="1.1" height="1.1"/><rect x="3" y="7" width="1.1" height="1.1"/><rect x="8" y="7" width="1.1" height="1.1"/><rect x="3" y="10.5" width="1.1" height="1.1"/><rect x="5.5" y="10.5" width="1.1" height="1.1"/><rect x="8" y="10.5" width="1.1" height="1.1"/></g></svg>
<div class="a" style="left:138px;top:290px;width:10px;height:1px;background:#4a4a4a"></div>
<div class="a" style="left:138px;top:292px;width:10px;height:8px;background:#505050"></div>
<svg style="left:136px;top:313px" width="16" height="13" viewBox="0 0 16 13"><rect x="0.7" y="0.7" width="14.6" height="11" fill="none" stroke="#4a4a4a" stroke-width="1.3"/><path d="M10.2,3.8 C9.8,3 9,2.8 8,2.8 C6.8,2.8 5.8,3.3 5.8,4.4 C5.8,6.6 10.2,5.2 10.2,7.4 C10.2,8.5 9.2,9 8,9 C7,9 6,8.6 5.7,7.9 M8,1.8 V10" fill="none" stroke="#4a4a4a" stroke-width="1.2"/></svg>
<svg style="left:258px;top:316px" width="10" height="6" viewBox="0 0 10 6"><path d="M0.8,0.8 L4.7,4.7 L8.6,0.8" fill="none" stroke="#4a4a4a" stroke-width="1.3"/></svg>
<svg style="left:137px;top:407.5px" width="14" height="14" viewBox="0 0 14 14"><path d="M0.8,0.8 H5 L6.5,2.8 H12.5 V12.3 H0.8 Z" fill="none" stroke="#4a4a4a" stroke-width="1.3" stroke-linejoin="round"/></svg>
<svg style="left:137px;top:455.3px" width="14" height="14" viewBox="0 0 14 14"><path d="M0.8,0.8 H5 L6.5,2.8 H12.5 V12.3 H0.8 Z" fill="none" stroke="#4a4a4a" stroke-width="1.3" stroke-linejoin="round"/></svg>
<svg style="left:137px;top:431px" width="15" height="15" viewBox="0 0 15 15"><g fill="none" stroke="#4a4a4a" stroke-width="1.3"><path d="M8,13 H1 V1 H12 V6.5"/><circle cx="10.2" cy="10.2" r="2"/><path d="M11.7,11.7 L13.6,13.6"/></g><g fill="#4a4a4a"><rect x="3" y="3.2" width="1.2" height="1.2"/><rect x="5" y="3.2" width="5" height="1.2"/><rect x="3" y="5.8" width="1.2" height="1.2"/><rect x="5" y="5.8" width="3.5" height="1.2"/><rect x="3" y="8.4" width="1.2" height="1.2"/></g></svg>
<svg style="left:137px;top:479px" width="14" height="14" viewBox="0 0 14 14"><g fill="none" stroke="#4a4a4a" stroke-width="1.3"><rect x="0.8" y="0.8" width="12" height="11.8"/><circle cx="6.8" cy="6" r="2.6"/><path d="M6.8,6 V3.4"/></g><rect x="3" y="9.5" width="7.6" height="1.5" fill="#4a4a4a"/></svg>
<svg style="left:259px;top:409.8px" width="7" height="10" viewBox="0 0 7 10"><path d="M1.3,0.9 L5.2,4.8 L1.3,8.7" fill="none" stroke="#4a4a4a" stroke-width="1.3"/></svg>
<svg style="left:259px;top:433.5px" width="7" height="10" viewBox="0 0 7 10"><path d="M1.3,0.9 L5.2,4.8 L1.3,8.7" fill="none" stroke="#4a4a4a" stroke-width="1.3"/></svg>
<svg style="left:259px;top:457.3px" width="7" height="10" viewBox="0 0 7 10"><path d="M1.3,0.9 L5.2,4.8 L1.3,8.7" fill="none" stroke="#4a4a4a" stroke-width="1.3"/></svg>
<svg style="left:259px;top:481px" width="7" height="10" viewBox="0 0 7 10"><path d="M1.3,0.9 L5.2,4.8 L1.3,8.7" fill="none" stroke="#4a4a4a" stroke-width="1.3"/></svg>
<div class="a" style="left:130px;top:652px;width:140px;height:1px;background:#e2e2e2"></div>
<svg style="left:137px;top:658px" width="12" height="12" viewBox="0 0 12 12"><path d="M5,1.5 L1.5,5.5 L5,9.5 M9.5,1.5 L6,5.5 L9.5,9.5" fill="none" stroke="#666" stroke-width="1.2"/></svg>
<svg style="left:228px;top:658px" width="13" height="13" viewBox="0 0 13 13"><circle cx="6.5" cy="6.5" r="5.4" fill="none" stroke="#666" stroke-width="1.2"/><path d="M6.5,3.5 V9.5 M3.5,6.5 H9.5" stroke="#666" stroke-width="1.5"/></svg>
<svg style="left:252px;top:658px" width="13" height="13" viewBox="0 0 13 13"><circle cx="6.5" cy="6.5" r="5.4" fill="none" stroke="#666" stroke-width="1.2"/><path d="M3.5,6.5 H9.5" stroke="#666" stroke-width="1.5"/></svg>
<div class="a" style="left:281.80px;top:167.00px;font-size:9.4px;line-height:9.4px;color:#3f444e;font-weight:normal;transform:scaleX(0.9648);transform-origin:0 0;-webkit-text-stroke:0.15px #3f444e">Company Workspace</div>
<svg style="left:1119px;top:162px" width="17" height="17" viewBox="0 0 17 17"><g transform="translate(8.3,8.3)" fill="none" stroke="#333" stroke-width="1.3"><path d="M-1.2,-6.6 L1.2,-6.6 L1.7,-4.6 L3.4,-3.7 L5.3,-4.5 L6.5,-2.5 L5,-1.1 L5,1.1 L6.5,2.5 L5.3,4.5 L3.4,3.7 L1.7,4.6 L1.2,6.6 L-1.2,6.6 L-1.7,4.6 L-3.4,3.7 L-5.3,4.5 L-6.5,2.5 L-5,1.1 L-5,-1.1 L-6.5,-2.5 L-5.3,-4.5 L-3.4,-3.7 L-1.7,-4.6 Z" stroke-linejoin="round"/><circle r="2"/></g></svg>
<div class="a" style="left:300.00px;top:198.00px;font-size:19.3px;line-height:19.3px;color:#222;font-weight:normal;font-family:'Liberation Serif',serif;transform:scaleX(1.0039);transform-origin:0 0;">Company Funding Sheet</div>
<div class="a" style="left:913.90px;top:200.00px;font-size:10.7px;line-height:10.7px;color:#555;font-weight:normal;transform:scaleX(0.9541);transform-origin:0 0;">Currency:</div>
<div class="a" style="left:963.60px;top:200.00px;font-size:10.7px;line-height:10.7px;color:#222;font-weight:bold;transform:scaleX(0.9648);transform-origin:0 0;">United States Dollar (USD)</div>
<svg style="left:1116px;top:196px" width="12" height="12" viewBox="0 0 12 12"><path d="M1,1 L10.5,10.5 M10.5,1 L1,10.5" stroke="#333" stroke-width="1.4"/></svg>
<div class="a" style="left:290px;top:224px;width:847px;height:32px;background:#f1f0ee"></div>
<svg style="left:308px;top:233px" width="15" height="15" viewBox="0 0 15 15"><rect x="1.4" y="1.2" width="12" height="12" rx="0.6" fill="none" stroke="#333" stroke-width="1.6"/><path d="M1.2,4.9 H13.6 M1.2,9.8 H13.6" stroke="#333" stroke-width="1.5"/></svg>
<svg style="left:336px;top:233px" width="15" height="15" viewBox="0 0 15 15"><rect x="1.9" y="1.2" width="12" height="12" rx="0.6" fill="none" stroke="#333" stroke-width="1.6"/><path d="M5.5,1.2 V13.2 M10.2,1.2 V13.2" stroke="#333" stroke-width="1.5"/></svg>
<div class="a" style="left:367.30px;top:236.00px;font-size:9.4px;line-height:9.4px;color:#444;font-weight:normal;transform:scaleX(0.9664);transform-origin:0 0;">View:</div>
<div class="a" style="left:402.00px;top:236.00px;font-size:9.5px;line-height:9.5px;color:#333;font-weight:normal;transform:scaleX(0.9798);transform-origin:0 0;">Default</div>
<svg style="left:441px;top:237px" width="10" height="6" viewBox="0 0 10 6"><path d="M0.5,0.5 H8.5 L4.5,4.8 Z" fill="#333"/></svg>
<svg style="left:471px;top:232px" width="16" height="16" viewBox="0 0 16 16"><path d="M2.2,13.3 L2.8,10.2 L11,2 A1.3,1.3 0 0 1 13.3,4.3 L5.1,12.5 Z M9.5,3.5 L11.8,5.8" fill="none" stroke="#333" stroke-width="1.4" stroke-linejoin="round"/></svg>
<svg style="left:500px;top:232px" width="16" height="16" viewBox="0 0 16 16"><path d="M7.3,2.2 A5.9,5.9 0 1 0 13.1,7.2" fill="none" stroke="#8a8a8a" stroke-width="1.2"/><path d="M9.6,2.2 L12.6,2.4 L12.2,5.4 Z" fill="#333"/></svg>
<svg style="left:530px;top:232px" width="16" height="16" viewBox="0 0 16 16"><g fill="none" stroke="#333" stroke-width="1.5"><path d="M4,5 V2 H11.5 V5"/><rect x="1.5" y="5" width="12.5" height="6"/><rect x="4.2" y="9" width="7" height="4.8"/></g></svg>
<svg style="left:553px;top:237px" width="9" height="6" viewBox="0 0 9 6"><path d="M0.5,0.5 H8 L4.25,4.8 Z" fill="#333"/></svg>
<svg style="left:577px;top:232px" width="16" height="16" viewBox="0 0 16 16"><g stroke="#333" stroke-width="1.3" fill="none"><path d="M1,2.5 H14 M1,6 H14 M1,9.5 H6 M1,13 H6"/><circle cx="10" cy="10.5" r="2.4"/><path d="M11.7,12.2 L14,14.5"/></g></svg>
<svg style="left:611px;top:232px" width="16" height="16" viewBox="0 0 16 16"><path d="M1,3.7 H14 M1,7.8 H14 M1,11.9 H14" stroke="#333" stroke-width="1.6"/></svg>
<svg style="left:634px;top:237px" width="9" height="6" viewBox="0 0 9 6"><path d="M0.5,0.5 H8 L4.25,4.8 Z" fill="#333"/></svg>
<div class="a" style="left:995px;top:256.5px;width:88px;height:35px;background:#e4e4e4"></div>
<div class="a" style="left:290px;top:291.6px;width:845px;height:1px;background:#dcdcdc"></div>
<div class="a" style="left:332.00px;top:279.00px;font-size:9px;line-height:9px;color:#1f1f1f;font-weight:bold;transform:scaleX(0.9426);transform-origin:0 0;">Fund Code</div>
<div class="a" style="left:442.50px;top:279.00px;font-size:9px;line-height:9px;color:#1f1f1f;font-weight:bold;transform:scaleX(0.9793);transform-origin:0 0;">Fund Name</div>
<div class="a" style="right:655.00px;top:269.00px;font-size:9px;line-height:9px;color:#1f1f1f;font-weight:bold;transform:scaleX(0.9630);transform-origin:100% 0;">Company</div>
<div class="a" style="right:655.00px;top:279.00px;font-size:9px;line-height:9px;color:#1f1f1f;font-weight:bold;transform:scaleX(0.9662);transform-origin:100% 0;">Funding</div>
<div class="a" style="right:566.00px;top:269.00px;font-size:9px;line-height:9px;color:#1f1f1f;font-weight:bold;transform:scaleX(0.9971);transform-origin:100% 0;">Manual Funding</div>
<div class="a" style="right:566.00px;top:279.00px;font-size:9px;line-height:9px;color:#1f1f1f;font-weight:bold;transform:scaleX(0.9767);transform-origin:100% 0;">by Project</div>
<div class="a" style="right:478.00px;top:269.00px;font-size:9px;line-height:9px;color:#1f1f1f;font-weight:bold;transform:scaleX(0.9624);transform-origin:100% 0;">Approved Fund</div>
<div class="a" style="right:478.00px;top:279.00px;font-size:9px;line-height:9px;color:#1f1f1f;font-weight:bold;transform:scaleX(0.9814);transform-origin:100% 0;">Appropriations</div>
<div class="a" style="right:389.00px;top:269.00px;font-size:9px;line-height:9px;color:#1f1f1f;font-weight:bold;transform:scaleX(0.9806);transform-origin:100% 0;">Total Project</div>
<div class="a" style="right:389.00px;top:279.00px;font-size:9px;line-height:9px;color:#1f1f1f;font-weight:bold;transform:scaleX(0.9718);transform-origin:100% 0;">Funding</div>
<div class="a" style="right:301.00px;top:269.00px;font-size:9px;line-height:9px;color:#1f1f1f;font-weight:bold;transform:scaleX(0.9779);transform-origin:100% 0;">Remaining</div>
<div class="a" style="right:301.00px;top:279.00px;font-size:9px;line-height:9px;color:#1f1f1f;font-weight:bold;transform:scaleX(0.9572);transform-origin:100% 0;">Company Funds</div>
<div class="a" style="right:212.00px;top:269.00px;font-size:9px;line-height:9px;color:#1f1f1f;font-weight:bold;transform:scaleX(0.9547);transform-origin:100% 0;">Records Funded</div>
<div class="a" style="right:212.00px;top:279.00px;font-size:9px;line-height:9px;color:#1f1f1f;font-weight:bold;transform:scaleX(0.9882);transform-origin:100% 0;">at Project level</div>
<div class="a" style="left:290px;top:292px;width:37px;height:109px;background:#f4f4f4"></div>
<div class="a" style="left:290px;top:292px;width:37px;height:19px;background:#e2e2e2"></div>
<div class="a" style="left:327px;top:292px;width:756px;height:109px;background:#f1f1f1"></div>
<div class="a" style="right:960.50px;top:297.00px;font-size:9.4px;line-height:9.4px;color:#555;font-weight:normal;">2</div>
<div class="a" style="left:343.80px;top:297.00px;font-size:9.5px;line-height:9.5px;color:#2a6c8c;font-weight:normal;transform:scaleX(0.9780);transform-origin:0 0;">10000.2020</div>
<div class="a" style="left:443.00px;top:297.00px;font-size:9.4px;line-height:9.4px;color:#5a5a5a;font-weight:normal;transform:scaleX(0.9530);transform-origin:0 0;">General Fund 2020</div>
<div class="a" style="right:643.00px;top:297.00px;font-size:9.4px;line-height:9.4px;color:#2a6c8c;font-weight:normal;">700,000,000.00</div>
<div class="a" style="right:555.00px;top:297.00px;font-size:9.4px;line-height:9.4px;color:#2a6c8c;font-weight:normal;">0.00</div>
<div class="a" style="right:467.00px;top:297.00px;font-size:9.4px;line-height:9.4px;color:#2a6c8c;font-weight:normal;">458,654,602.77</div>
<div class="a" style="right:378.00px;top:297.00px;font-size:9.4px;line-height:9.4px;color:#2a6c8c;font-weight:normal;">458,654,602.77</div>
<div class="a" style="right:290.00px;top:297.00px;font-size:9.4px;line-height:9.4px;color:#2a6c8c;font-weight:normal;">241,345,397.23</div>
<div class="a" style="right:201.00px;top:297.00px;font-size:9.4px;line-height:9.4px;color:#2a6c8c;font-weight:normal;">7,380,379.32</div>
<div class="a" style="left:290px;top:310.75px;width:845px;height:1px;background:#dfdfdf"></div>
<div class="a" style="right:960.50px;top:317.00px;font-size:9.4px;line-height:9.4px;color:#555;font-weight:normal;">3</div>
<div class="a" style="left:343.80px;top:317.00px;font-size:9.5px;line-height:9.5px;color:#2a6c8c;font-weight:normal;transform:scaleX(0.9780);transform-origin:0 0;">10000.2021</div>
<div class="a" style="left:443.00px;top:317.00px;font-size:9.4px;line-height:9.4px;color:#5a5a5a;font-weight:normal;transform:scaleX(0.9530);transform-origin:0 0;">General Fund 2021</div>
<div class="a" style="right:643.00px;top:317.00px;font-size:9.4px;line-height:9.4px;color:#2a6c8c;font-weight:normal;">650,000,000.00</div>
<div class="a" style="right:555.00px;top:317.00px;font-size:9.4px;line-height:9.4px;color:#2a6c8c;font-weight:normal;">0.00</div>
<div class="a" style="right:467.00px;top:317.00px;font-size:9.4px;line-height:9.4px;color:#2a6c8c;font-weight:normal;">295,926,031.85</div>
<div class="a" style="right:378.00px;top:317.00px;font-size:9.4px;line-height:9.4px;color:#2a6c8c;font-weight:normal;">295,926,031.85</div>
<div class="a" style="right:290.00px;top:317.00px;font-size:9.4px;line-height:9.4px;color:#2a6c8c;font-weight:normal;">354,073,968.15</div>
<div class="a" style="right:201.00px;top:317.00px;font-size:9.4px;line-height:9.4px;color:#2a6c8c;font-weight:normal;">0.00</div>
<div class="a" style="left:290px;top:330.2px;width:845px;height:1px;background:#dfdfdf"></div>
<div class="a" style="right:960.50px;top:336.00px;font-size:9.4px;line-height:9.4px;color:#555;font-weight:normal;">4</div>
<div class="a" style="left:343.80px;top:336.00px;font-size:9.5px;line-height:9.5px;color:#2a6c8c;font-weight:normal;transform:scaleX(0.9780);transform-origin:0 0;">10000.2022</div>
<div class="a" style="left:443.00px;top:336.00px;font-size:9.4px;line-height:9.4px;color:#5a5a5a;font-weight:normal;transform:scaleX(0.9530);transform-origin:0 0;">General Fund 2022</div>
<div class="a" style="right:643.00px;top:336.00px;font-size:9.4px;line-height:9.4px;color:#2a6c8c;font-weight:normal;">700,000,000.00</div>
<div class="a" style="right:555.00px;top:336.00px;font-size:9.4px;line-height:9.4px;color:#2a6c8c;font-weight:normal;">0.00</div>
<div class="a" style="right:467.00px;top:336.00px;font-size:9.4px;line-height:9.4px;color:#2a6c8c;font-weight:normal;">105,963,000.00</div>
<div class="a" style="right:378.00px;top:336.00px;font-size:9.4px;line-height:9.4px;color:#2a6c8c;font-weight:normal;">105,963,000.00</div>
<div class="a" style="right:290.00px;top:336.00px;font-size:9.4px;line-height:9.4px;color:#2a6c8c;font-weight:normal;">594,037,000.00</div>
<div class="a" style="right:201.00px;top:336.00px;font-size:9.4px;line-height:9.4px;color:#2a6c8c;font-weight:normal;">4,500,000.00</div>
<div class="a" style="left:290px;top:349.65px;width:845px;height:1px;background:#dfdfdf"></div>
<div class="a" style="right:960.50px;top:356.00px;font-size:9.4px;line-height:9.4px;color:#555;font-weight:normal;">5</div>
<div class="a" style="left:343.80px;top:356.00px;font-size:9.5px;line-height:9.5px;color:#2a6c8c;font-weight:normal;transform:scaleX(0.9780);transform-origin:0 0;">10000.2023</div>
<div class="a" style="left:443.00px;top:356.00px;font-size:9.4px;line-height:9.4px;color:#5a5a5a;font-weight:normal;transform:scaleX(0.9530);transform-origin:0 0;">General Fund 2023</div>
<div class="a" style="right:643.00px;top:356.00px;font-size:9.4px;line-height:9.4px;color:#2a6c8c;font-weight:normal;">0.00</div>
<div class="a" style="right:555.00px;top:356.00px;font-size:9.4px;line-height:9.4px;color:#2a6c8c;font-weight:normal;">0.00</div>
<div class="a" style="right:467.00px;top:356.00px;font-size:9.4px;line-height:9.4px;color:#2a6c8c;font-weight:normal;">0.00</div>
<div class="a" style="right:378.00px;top:356.00px;font-size:9.4px;line-height:9.4px;color:#2a6c8c;font-weight:normal;">0.00</div>
<div class="a" style="right:290.00px;top:356.00px;font-size:9.4px;line-height:9.4px;color:#2a6c8c;font-weight:normal;">0.00</div>
<div class="a" style="right:201.00px;top:356.00px;font-size:9.4px;line-height:9.4px;color:#2a6c8c;font-weight:normal;">0.00</div>
<div class="a" style="left:290px;top:369.1px;width:845px;height:1px;background:#dfdfdf"></div>
<div class="a" style="right:960.50px;top:375.00px;font-size:9.4px;line-height:9.4px;color:#555;font-weight:normal;">6</div>
<div class="a" style="left:343.80px;top:375.00px;font-size:9.5px;line-height:9.5px;color:#2a6c8c;font-weight:normal;transform:scaleX(0.9780);transform-origin:0 0;">10000.2024</div>
<div class="a" style="left:443.00px;top:375.00px;font-size:9.4px;line-height:9.4px;color:#5a5a5a;font-weight:normal;transform:scaleX(0.9530);transform-origin:0 0;">General Fund 2024</div>
<div class="a" style="right:643.00px;top:375.00px;font-size:9.4px;line-height:9.4px;color:#2a6c8c;font-weight:normal;">0.00</div>
<div class="a" style="right:555.00px;top:375.00px;font-size:9.4px;line-height:9.4px;color:#2a6c8c;font-weight:normal;">0.00</div>
<div class="a" style="right:467.00px;top:375.00px;font-size:9.4px;line-height:9.4px;color:#2a6c8c;font-weight:normal;">0.00</div>
<div class="a" style="right:378.00px;top:375.00px;font-size:9.4px;line-height:9.4px;color:#2a6c8c;font-weight:normal;">0.00</div>
<div class="a" style="right:290.00px;top:375.00px;font-size:9.4px;line-height:9.4px;color:#2a6c8c;font-weight:normal;">0.00</div>
<div class="a" style="right:201.00px;top:375.00px;font-size:9.4px;line-height:9.4px;color:#2a6c8c;font-weight:normal;">0.00</div>
<div class="a" style="left:290px;top:388.55px;width:845px;height:1px;background:#dfdfdf"></div>
<div class="a" style="right:960.50px;top:395.00px;font-size:9.4px;line-height:9.4px;color:#555;font-weight:normal;">7</div>
<div class="a" style="left:343.80px;top:395.00px;font-size:9.5px;line-height:9.5px;color:#2a6c8c;font-weight:normal;transform:scaleX(0.9780);transform-origin:0 0;">10000.2025</div>
<div class="a" style="left:443.00px;top:395.00px;font-size:9.4px;line-height:9.4px;color:#5a5a5a;font-weight:normal;transform:scaleX(0.9530);transform-origin:0 0;">General Fund 2025</div>
<div class="a" style="right:643.00px;top:395.00px;font-size:9.4px;line-height:9.4px;color:#2a6c8c;font-weight:normal;">0.00</div>
<div class="a" style="right:555.00px;top:395.00px;font-size:9.4px;line-height:9.4px;color:#2a6c8c;font-weight:normal;">0.00</div>
<div class="a" style="right:467.00px;top:395.00px;font-size:9.4px;line-height:9.4px;color:#2a6c8c;font-weight:normal;">0.00</div>
<div class="a" style="right:378.00px;top:395.00px;font-size:9.4px;line-height:9.4px;color:#2a6c8c;font-weight:normal;">0.00</div>
<div class="a" style="right:290.00px;top:395.00px;font-size:9.4px;line-height:9.4px;color:#2a6c8c;font-weight:normal;">0.00</div>
<div class="a" style="right:201.00px;top:395.00px;font-size:9.4px;line-height:9.4px;color:#2a6c8c;font-weight:normal;">0.00</div>
<div class="a" style="left:438px;top:292px;width:1px;height:109px;background:#e2e2e2"></div>
<div class="a" style="left:641px;top:292px;width:1px;height:109px;background:#e2e2e2"></div>
<div class="a" style="left:729px;top:292px;width:1px;height:109px;background:#e2e2e2"></div>
<div class="a" style="left:817px;top:292px;width:1px;height:109px;background:#e2e2e2"></div>
<div class="a" style="left:906px;top:292px;width:1px;height:109px;background:#e2e2e2"></div>
<div class="a" style="left:994px;top:292px;width:1px;height:109px;background:#e2e2e2"></div>
<div class="a" style="left:1083px;top:292px;width:1px;height:109px;background:#e2e2e2"></div>
<div class="a" style="left:327px;top:256px;width:1px;height:165px;background:#b9b9b9"></div>
<div class="a" style="left:550px;top:256px;width:2px;height:165px;background:#c9cad2"></div>
<div class="a" style="left:995px;top:292.6px;width:88px;height:19px;border:1.3px solid #8a9585"></div>
<div class="a" style="left:290px;top:401px;width:793px;height:18.5px;background:#fcf7d4"></div>
<div class="a" style="left:290px;top:400px;width:845px;height:1.5px;background:#3a3a3a"></div>
<div class="a" style="left:290px;top:419.1px;width:845px;height:1px;background:#e2e2e2"></div>
<div class="a" style="left:438px;top:402px;width:1px;height:18px;background:#ece6c2"></div>
<div class="a" style="left:641px;top:402px;width:1px;height:18px;background:#ece6c2"></div>
<div class="a" style="left:729px;top:402px;width:1px;height:18px;background:#ece6c2"></div>
<div class="a" style="left:817px;top:402px;width:1px;height:18px;background:#ece6c2"></div>
<div class="a" style="left:906px;top:402px;width:1px;height:18px;background:#ece6c2"></div>
<div class="a" style="left:994px;top:402px;width:1px;height:18px;background:#ece6c2"></div>
<div class="a" style="left:1083px;top:402px;width:1px;height:18px;background:#ece6c2"></div>
<div class="a" style="left:327px;top:402px;width:1px;height:19px;background:#b9b9b9"></div>
<div class="a" style="left:550px;top:402px;width:2px;height:19px;background:#c9cad2"></div>
<div class="a" style="right:853.00px;top:407.00px;font-size:9.2px;line-height:9.2px;color:#555;font-weight:bold;transform:scaleX(0.9405);transform-origin:100% 0;">Total</div>
<div class="a" style="right:643.00px;top:406.00px;font-size:9.5px;line-height:9.5px;color:#4a4a40;font-weight:normal;transform:scaleX(0.9970);transform-origin:100% 0;-webkit-text-stroke:0.05px #4a4a40">2,650,800,000.00</div>
<div class="a" style="right:555.00px;top:406.00px;font-size:9.5px;line-height:9.5px;color:#4a4a40;font-weight:normal;transform:scaleX(0.9892);transform-origin:100% 0;-webkit-text-stroke:0.05px #4a4a40">0.00</div>
<div class="a" style="right:467.00px;top:406.00px;font-size:9.5px;line-height:9.5px;color:#4a4a40;font-weight:normal;transform:scaleX(0.9955);transform-origin:100% 0;-webkit-text-stroke:0.05px #4a4a40">864,527,754.62</div>
<div class="a" style="right:378.00px;top:406.00px;font-size:9.5px;line-height:9.5px;color:#4a4a40;font-weight:normal;transform:scaleX(0.9955);transform-origin:100% 0;-webkit-text-stroke:0.05px #4a4a40">864,527,754.62</div>
<div class="a" style="right:290.00px;top:406.00px;font-size:9.5px;line-height:9.5px;color:#4a4a40;font-weight:normal;transform:scaleX(0.9903);transform-origin:100% 0;-webkit-text-stroke:0.05px #4a4a40">1,786,272,245.38</div>
<div class="a" style="right:201.00px;top:406.00px;font-size:9.5px;line-height:9.5px;color:#4a4a40;font-weight:normal;transform:scaleX(0.9865);transform-origin:100% 0;-webkit-text-stroke:0.05px #4a4a40">11,880,379.32</div>
<div class="a" style="left:1135px;top:299px;width:2px;height:31px;background:#c4c4c4;border-radius:1px"></div>
<div class="a" style="left:1094px;top:364.8px;width:27px;height:53.4px;background:#2e2b28;border-radius:13.5px;box-shadow:0 1px 3px rgba(0,0,0,0.35)"></div>
<svg style="left:1097.2px;top:368px" width="20" height="20" viewBox="0 0 20 20"><circle cx="10" cy="10" r="8.1" fill="none" stroke="#e8e8e8" stroke-width="1.5"/><text x="10.2" y="14.6" font-family="Liberation Serif" font-style="italic" font-weight="bold" font-size="12.5" fill="#e6e6e6" text-anchor="middle">i</text></svg>
<svg style="left:1100.4px;top:393.6px" width="15" height="15" viewBox="0 0 15 15"><circle cx="2.0" cy="2.0" r="1.75" fill="#85827d"/><circle cx="7.4" cy="2.0" r="1.75" fill="#85827d"/><circle cx="12.8" cy="2.0" r="1.75" fill="#85827d"/><circle cx="2.0" cy="7.4" r="1.75" fill="#85827d"/><circle cx="7.4" cy="7.4" r="1.75" fill="#85827d"/><circle cx="12.8" cy="7.4" r="1.75" fill="#85827d"/><circle cx="2.0" cy="12.8" r="1.75" fill="#85827d"/><circle cx="7.4" cy="12.8" r="1.75" fill="#85827d"/><circle cx="12.8" cy="12.8" r="1.75" fill="#85827d"/></svg>
<div class="a" style="left:290.00px;top:427.00px;font-size:11px;line-height:11px;color:#222;font-weight:bold;transform:scaleX(0.9500);transform-origin:0 0;">Total: 24</div>
<div class="a" style="left:282px;top:447.6px;width:856px;height:1px;background:#d8d8d8"></div>
<div class="a" style="left:707.4px;top:446.5px;width:3px;height:3px;background:#3c3c3c;border-radius:50%"></div>
<div class="a" style="left:712.15px;top:446.5px;width:3px;height:3px;background:#3c3c3c;border-radius:50%"></div>
<div class="a" style="left:716.9px;top:446.5px;width:3px;height:3px;background:#3c3c3c;border-radius:50%"></div>
<div class="a" style="left:290.20px;top:467.00px;font-size:11px;line-height:11px;color:#222;font-weight:bold;transform:scaleX(0.9210);transform-origin:0 0;">Transactions</div>
<div class="a" style="left:373.90px;top:467.00px;font-size:11px;line-height:11px;color:#555;font-weight:normal;transform:scaleX(0.9858);transform-origin:0 0;-webkit-text-stroke:0.25px #555">Cell Details</div>
<div class="a" style="left:450.00px;top:467.00px;font-size:11px;line-height:11px;color:#555;font-weight:normal;transform:scaleX(1.0206);transform-origin:0 0;-webkit-text-stroke:0.25px #555">Attachments</div>
<div class="a" style="left:534.00px;top:467.00px;font-size:11px;line-height:11px;color:#555;font-weight:normal;transform:scaleX(1.0087);transform-origin:0 0;-webkit-text-stroke:0.25px #555">Notes</div>
<div class="a" style="left:585.00px;top:467.00px;font-size:11px;line-height:11px;color:#555;font-weight:normal;transform:scaleX(1.0412);transform-origin:0 0;-webkit-text-stroke:0.25px #555">Audit Log</div>
<div class="a" style="left:290px;top:493.6px;width:63px;height:1.8px;background:#5e7a52"></div>
<svg style="left:1096px;top:467px" width="15" height="15" viewBox="0 0 15 15"><path d="M1.4,4.6 V1.4 H4.6 M10.4,1.4 H13.6 V4.6 M13.6,10 V13.3 H10.4 M4.6,13.3 H1.4 V10" fill="none" stroke="#1a1a1a" stroke-width="1.5"/></svg>
<svg style="left:1120px;top:467px" width="15" height="15" viewBox="0 0 15 15"><rect x="1.7" y="2.6" width="2.9" height="9.6" rx="0.8" fill="none" stroke="#1a1a1a" stroke-width="1.3"/><rect x="6.9" y="2.6" width="2.9" height="9.6" rx="0.8" fill="none" stroke="#1a1a1a" stroke-width="1.3"/><path d="M12.1,1.4 V13.6" stroke="#666" stroke-width="1.6"/></svg>
<div class="a" style="left:300px;top:495.4px;width:838px;height:25.8px;background:#f1f0ee"></div>
<svg style="left:303px;top:501px" width="15" height="14" viewBox="0 0 15 14"><g stroke="#222" fill="none" stroke-width="1.3"><path d="M0.5,1.2 H13.5 M0.5,4.2 H13.5 M0.5,8 H5.5 M0.5,11.6 H5.5"/><circle cx="9.8" cy="9.6" r="2.2"/><path d="M11.4,11.2 L13.5,13.3"/></g></svg>
<div class="a" style="left:305px;top:540.7px;width:831px;height:1px;background:#dcdcdc"></div>
<div class="a" style="left:348.20px;top:529.00px;font-size:8.8px;line-height:8.8px;color:#1f1f1f;font-weight:bold;transform:scaleX(1.0141);transform-origin:0 0;">No</div>
<svg style="left:397px;top:532px" width="9" height="6" viewBox="0 0 9 6"><path d="M0.5,0.5 H8 L4.25,4.8 Z" fill="#1f73b7"/></svg>
<div class="a" style="left:415.20px;top:529.00px;font-size:8.8px;line-height:8.8px;color:#1f1f1f;font-weight:bold;transform:scaleX(1.0258);transform-origin:0 0;">Title</div>
<div class="a" style="left:637.00px;top:529.00px;font-size:8.8px;line-height:8.8px;color:#1f1f1f;font-weight:bold;transform:scaleX(1.0198);transform-origin:0 0;">Item Description</div>
<div class="a" style="left:736.60px;top:529.00px;font-size:8.8px;line-height:8.8px;color:#1f1f1f;font-weight:bold;transform:scaleX(1.0177);transform-origin:0 0;">Split</div>
<div class="a" style="right:416.00px;top:529.00px;font-size:8.8px;line-height:8.8px;color:#1f1f1f;font-weight:bold;transform:scaleX(1.0170);transform-origin:100% 0;">Amount</div>
<div class="a" style="left:305px;top:541.2px;width:38px;height:58.3px;background:#f4f4f4"></div>
<div class="a" style="left:343px;top:541.2px;width:536px;height:58.3px;background:#f1f1f1"></div>
<div class="a" style="left:305px;top:560.2px;width:831px;height:1px;background:#dfdfdf"></div>
<div class="a" style="right:944.30px;top:548.00px;font-size:9.3px;line-height:9.3px;color:#555;font-weight:normal;">1</div>
<div class="a" style="left:347.80px;top:548.00px;font-size:9.1px;line-height:9.1px;color:#5a5a5a;font-weight:normal;transform:scaleX(0.9580);transform-origin:0 0;">PRJ333</div>
<div class="a" style="left:418.60px;top:548.00px;font-size:9.1px;line-height:9.1px;color:#5a5a5a;font-weight:normal;transform:scaleX(0.9791);transform-origin:0 0;">Newsome Hall Major Renovation Project I</div>
<div class="a" style="right:405.00px;top:548.00px;font-size:9.2px;line-height:9.2px;color:#5a5a5a;font-weight:normal;transform:scaleX(1.0112);transform-origin:100% 0;">382,216.63</div>
<div class="a" style="left:305px;top:579.7px;width:831px;height:1px;background:#dfdfdf"></div>
<div class="a" style="right:944.30px;top:567.00px;font-size:9.3px;line-height:9.3px;color:#555;font-weight:normal;">2</div>
<div class="a" style="left:347.80px;top:567.00px;font-size:9.1px;line-height:9.1px;color:#5a5a5a;font-weight:normal;transform:scaleX(0.9580);transform-origin:0 0;">PRJ317</div>
<div class="a" style="left:418.60px;top:567.00px;font-size:9.1px;line-height:9.1px;color:#5a5a5a;font-weight:normal;transform:scaleX(0.9876);transform-origin:0 0;">Main Hospital Patient Room Major Renovations</div>
<div class="a" style="right:405.00px;top:567.00px;font-size:9.2px;line-height:9.2px;color:#5a5a5a;font-weight:normal;transform:scaleX(1.0027);transform-origin:100% 0;">4,478,191.05</div>
<div class="a" style="left:305px;top:599.1px;width:831px;height:1px;background:#dfdfdf"></div>
<div class="a" style="right:944.30px;top:586.00px;font-size:9.3px;line-height:9.3px;color:#555;font-weight:normal;">3</div>
<div class="a" style="left:347.80px;top:586.00px;font-size:9.1px;line-height:9.1px;color:#5a5a5a;font-weight:normal;transform:scaleX(0.9580);transform-origin:0 0;">PRJ315</div>
<div class="a" style="left:418.60px;top:586.00px;font-size:9.1px;line-height:9.1px;color:#5a5a5a;font-weight:normal;transform:scaleX(0.9843);transform-origin:0 0;">Main Hospital Emergency Room Major Renovation</div>
<div class="a" style="right:405.00px;top:586.00px;font-size:9.2px;line-height:9.2px;color:#5a5a5a;font-weight:normal;transform:scaleX(1.0027);transform-origin:100% 0;">2,519,971.64</div>
<div class="a" style="left:410px;top:542px;width:1px;height:58px;background:#e2e2e2"></div>
<div class="a" style="left:633px;top:542px;width:1px;height:58px;background:#e2e2e2"></div>
<div class="a" style="left:733px;top:542px;width:1px;height:58px;background:#e2e2e2"></div>
<div class="a" style="left:778px;top:542px;width:1px;height:58px;background:#e2e2e2"></div>
<div class="a" style="left:879px;top:542px;width:1px;height:58px;background:#e2e2e2"></div>
<div class="a" style="left:343px;top:521px;width:2px;height:108px;background:#bcc0cb"></div>
<div class="a" style="left:305px;top:609px;width:574px;height:20px;background:#fcf7d4"></div>
<div class="a" style="left:305px;top:607.8px;width:831px;height:1.4px;background:#3a3a3a"></div>
<div class="a" style="left:305px;top:628.5px;width:831px;height:1px;background:#e2e2e2"></div>
<div class="a" style="left:410px;top:609px;width:1px;height:20px;background:#ece6c2"></div>
<div class="a" style="left:633px;top:609px;width:1px;height:20px;background:#ece6c2"></div>
<div class="a" style="left:733px;top:609px;width:1px;height:20px;background:#ece6c2"></div>
<div class="a" style="left:778px;top:609px;width:1px;height:20px;background:#ece6c2"></div>
<div class="a" style="left:879px;top:609px;width:1px;height:20px;background:#ece6c2"></div>
<div class="a" style="left:343px;top:609px;width:2px;height:20px;background:#bcc0cb"></div>
<div class="a" style="left:641.00px;top:616.00px;font-size:9px;line-height:9px;color:#555;font-weight:bold;transform:scaleX(1.0070);transform-origin:0 0;">Total Amount</div>
<div class="a" style="right:405.00px;top:616.00px;font-size:9.3px;line-height:9.3px;color:#333;font-weight:bold;transform:scaleX(1.0056);transform-origin:100% 0;">7,380,379.32</div>
<div class="a" style="left:304.80px;top:635.00px;font-size:10px;line-height:10px;color:#222;font-weight:bold;transform:scaleX(0.8729);transform-origin:0 0;">Total: 3</div>
</body></html>
